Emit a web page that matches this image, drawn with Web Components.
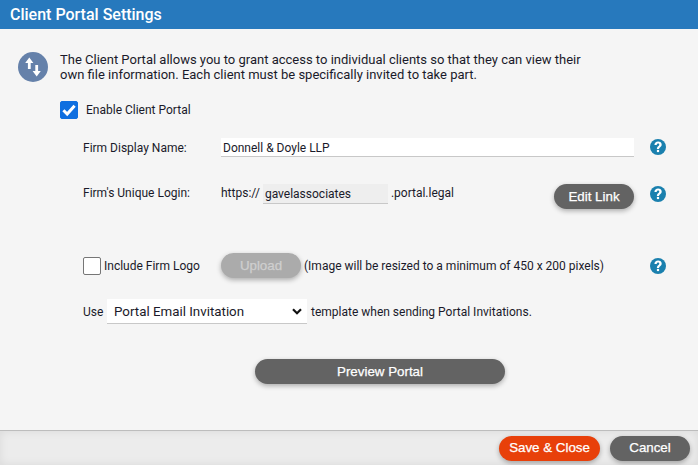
<!DOCTYPE html>
<html>
<head>
<meta charset="utf-8">
<title>Client Portal Settings</title>
<style>
  html, body { margin: 0; height: 100%; }
  body { font-family: Roboto, "Liberation Sans", sans-serif; color: #1a1a2a; }
</style>
</head>
<body>
<portal-settings></portal-settings>

<script>
class PillButton extends HTMLElement {
  constructor() {
    super();
    this.attachShadow({ mode: 'open' });
    this.shadowRoot.innerHTML = `
      <style>
        :host {
          display: flex;
          justify-content: center;
          align-items: center;
          box-sizing: border-box;
          height: 25px;
          border-radius: 13px;
          background: var(--pill-bg, #636363);
          color: var(--pill-fg, #fff);
          font: 400 13.333px/1 "Liberation Sans", Arial, sans-serif;
          -webkit-text-stroke: 0.25px currentColor;
          box-shadow: 0 2px 5px rgba(0, 0, 0, 0.3);
        }
      </style>
      <slot></slot>
    `;
  }
}

class CheckBox extends HTMLElement {
  constructor() {
    super();
    this.attachShadow({ mode: 'open' });
    this.shadowRoot.innerHTML = `
      <style>
        :host {
          display: block;
          flex: none;
          box-sizing: border-box;
          width: 18px;
          height: 18px;
          border-radius: 2px;
          background: #fff;
          border: 1px solid #767676;
        }
        :host([checked]) { background: #0f6fe0; border-color: #0f6fe0; }
        svg { display: block; width: 16px; height: 16px; }
      </style>
    `;
    if (this.hasAttribute('checked')) {
      this.shadowRoot.innerHTML += `<svg viewBox="0 0 16 16"><path d="M2.4 8.2 6.2 12 13.6 3.8" fill="none" stroke="#fff" stroke-width="3"/></svg>`;
    }
  }
}

class HelpIcon extends HTMLElement {
  constructor() {
    super();
    this.attachShadow({ mode: 'open' });
    this.shadowRoot.innerHTML = `
      <style>
        :host { display: block; flex: none; width: 16px; height: 16px; }
        svg { display: block; }
      </style>
      <svg width="16" height="16" viewBox="0 0 16 16">
        <circle cx="8" cy="8" r="8" fill="#1a80ae"/>
        <path d="M4.4 6C4.5 3.8 6 2.5 8.1 2.5 10.2 2.5 11.7 3.7 11.7 5.6 11.7 7 10.9 7.7 10 8.4 9.3 8.9 9.1 9.2 9.1 10H6.9C6.9 8.6 7.3 7.9 8.2 7.2 8.9 6.7 9.3 6.3 9.3 5.7 9.3 5 8.8 4.6 8.1 4.6 7.3 4.6 6.8 5.2 6.7 6Z" fill="#fff"/>
        <rect x="6.9" y="10.9" width="2.2" height="2.2" fill="#fff"/>
      </svg>
    `;
  }
}

class TransferIcon extends HTMLElement {
  constructor() {
    super();
    this.attachShadow({ mode: 'open' });
    this.shadowRoot.innerHTML = `
      <style>
        :host { display: block; flex: none; width: 30px; height: 30px; }
        svg { display: block; }
      </style>
      <svg width="30" height="30" viewBox="0 0 30 30">
        <circle cx="15" cy="15" r="15" fill="#6581aa"/>
        <path d="M11.3 5.5 7.2 11H9.9V17H12.7V11H15.4Z" fill="#fff"/>
        <path d="M18.7 24.5 22.8 19H20.1V13H17.3V19H14.6Z" fill="#fff"/>
      </svg>
    `;
  }
}

class TextField extends HTMLElement {
  constructor() {
    super();
    this.attachShadow({ mode: 'open' });
    this.shadowRoot.innerHTML = `
      <style>
        :host {
          display: flex;
          align-items: center;
          box-sizing: border-box;
          padding: 1px 0 0 2px;
          background: #fff;
          border-bottom: 1px solid #c8c8c8;
          font-size: 12px;
          color: #1a1a2a;
        }
        :host([readonly]) { background: #eeeeee; }
      </style>
      <slot></slot>
    `;
  }
}

class SelectField extends HTMLElement {
  constructor() {
    super();
    this.attachShadow({ mode: 'open' });
    this.shadowRoot.innerHTML = `
      <style>
        :host {
          display: flex;
          align-items: center;
          justify-content: space-between;
          box-sizing: border-box;
          width: 200px;
          height: 25px;
          padding: 0 5px 0 7px;
          background: #fff;
          border-bottom: 1px solid #c8c8c8;
          font-size: 13.333px;
          color: #1a1a2a;
        }
        svg { display: block; }
      </style>
      <slot></slot>
      <svg width="10" height="7" viewBox="0 0 10 7"><path d="M1 1.2 5 5.2 9 1.2" fill="none" stroke="#111" stroke-width="2.2"/></svg>
    `;
  }
}

class PortalSettings extends HTMLElement {
  constructor() {
    super();
    this.attachShadow({ mode: 'open' });
    this.shadowRoot.innerHTML = `
      <style>
        :host {
          display: flex;
          flex-direction: column;
          height: 465px;
          overflow: hidden;
          background: #f5f5f5;
          font-size: 12px;
          color: #1a1a2a;
        }
        header {
          height: 29px;
          flex: none;
          box-sizing: border-box;
          padding: 0 10px 1px;
          display: flex;
          align-items: center;
          background: #2779bd;
          color: #fff;
          font-size: 16px;
          font-weight: 500;
        }
        main { flex: 1; padding: 23px 32px 0 18px; }
        .intro { display: flex; gap: 12px; font-size: 13px; line-height: 15px; height: 30px; }
        .intro p { margin: 0; width: 530px; }
        .enable { display: flex; align-items: center; gap: 8px; height: 18px; margin: 19px 0 0 42px; }
        .row { display: flex; align-items: center; margin-left: 65px; }
        .label { width: 138px; flex: none; }
        .name { height: 19px; margin-top: 19px; }
        .name text-field { width: 413px; height: 19px; }
        .name help-icon { margin: -1px 0 0 16px; }
        .login { height: 25px; margin-top: 27px; align-items: flex-start; }
        .login .label, .login .txt { line-height: 19px; }
        .login text-field { width: 125px; height: 20px; margin: 0 3px; }
        .login pill-button { width: 80px; margin-left: 100px; }
        .login help-icon { margin: 2px 0 0 16px; }
        .logo { height: 25px; margin-top: 44px; }
        .logo .inc { display: flex; align-items: center; gap: 3px; width: 138px; flex: none; }
        .logo pill-button { width: 80px; --pill-bg: #ababab; --pill-fg: #cfcfcf; }
        .logo .note { margin-left: 3px; width: 346px; flex: none; }
        .use { height: 25px; margin-top: 21px; }
        .use select-field { margin: 0 4px 0 3px; }
        .use .w { width: 21px; }
        .preview { width: 250px; margin: 35px 0 0 237px; }
        footer {
          height: 35px;
          flex: none;
          box-sizing: border-box;
          display: flex;
          justify-content: flex-end;
          align-items: center;
          gap: 10px;
          padding: 0 8px 0 0;
          border-top: 1px solid #bdbdbd;
          background: #ececec;
          box-shadow: inset 0 0 10px rgba(0, 0, 0, 0.08);
        }
        footer .save { width: 101px; --pill-bg: #e8400a; }
        footer .cancel { width: 80px; }
      </style>
      <header>Client Portal Settings</header>
      <main>
        <div class="intro">
          <transfer-icon></transfer-icon>
          <p>The Client Portal allows you to grant access to individual clients so that they can view their own file information. Each client must be specifically invited to take part.</p>
        </div>
        <div class="enable"><check-box checked></check-box><span>Enable Client Portal</span></div>
        <div class="row name">
          <span class="label">Firm Display Name:</span>
          <text-field>Donnell &amp; Doyle LLP</text-field>
          <help-icon></help-icon>
        </div>
        <div class="row login">
          <span class="label">Firm's Unique Login:</span>
          <span class="txt">https://</span>
          <text-field readonly>gavelassociates</text-field>
          <span class="txt">.portal.legal</span>
          <pill-button>Edit Link</pill-button>
          <help-icon></help-icon>
        </div>
        <div class="row logo">
          <span class="inc"><check-box></check-box><span>Include Firm Logo</span></span>
          <pill-button>Upload</pill-button>
          <span class="note">(Image will be resized to a minimum of 450 x 200 pixels)</span>
          <help-icon></help-icon>
        </div>
        <div class="row use">
          <span class="w">Use</span>
          <select-field>Portal Email Invitation</select-field>
          <span>template when sending Portal Invitations.</span>
        </div>
        <pill-button class="preview">Preview Portal</pill-button>
      </main>
      <footer>
        <pill-button class="save">Save &amp; Close</pill-button>
        <pill-button class="cancel">Cancel</pill-button>
      </footer>
    `;
  }
}

customElements.define('pill-button', PillButton);
customElements.define('check-box', CheckBox);
customElements.define('help-icon', HelpIcon);
customElements.define('transfer-icon', TransferIcon);
customElements.define('text-field', TextField);
customElements.define('select-field', SelectField);
customElements.define('portal-settings', PortalSettings);
</script>
</body>
</html>
